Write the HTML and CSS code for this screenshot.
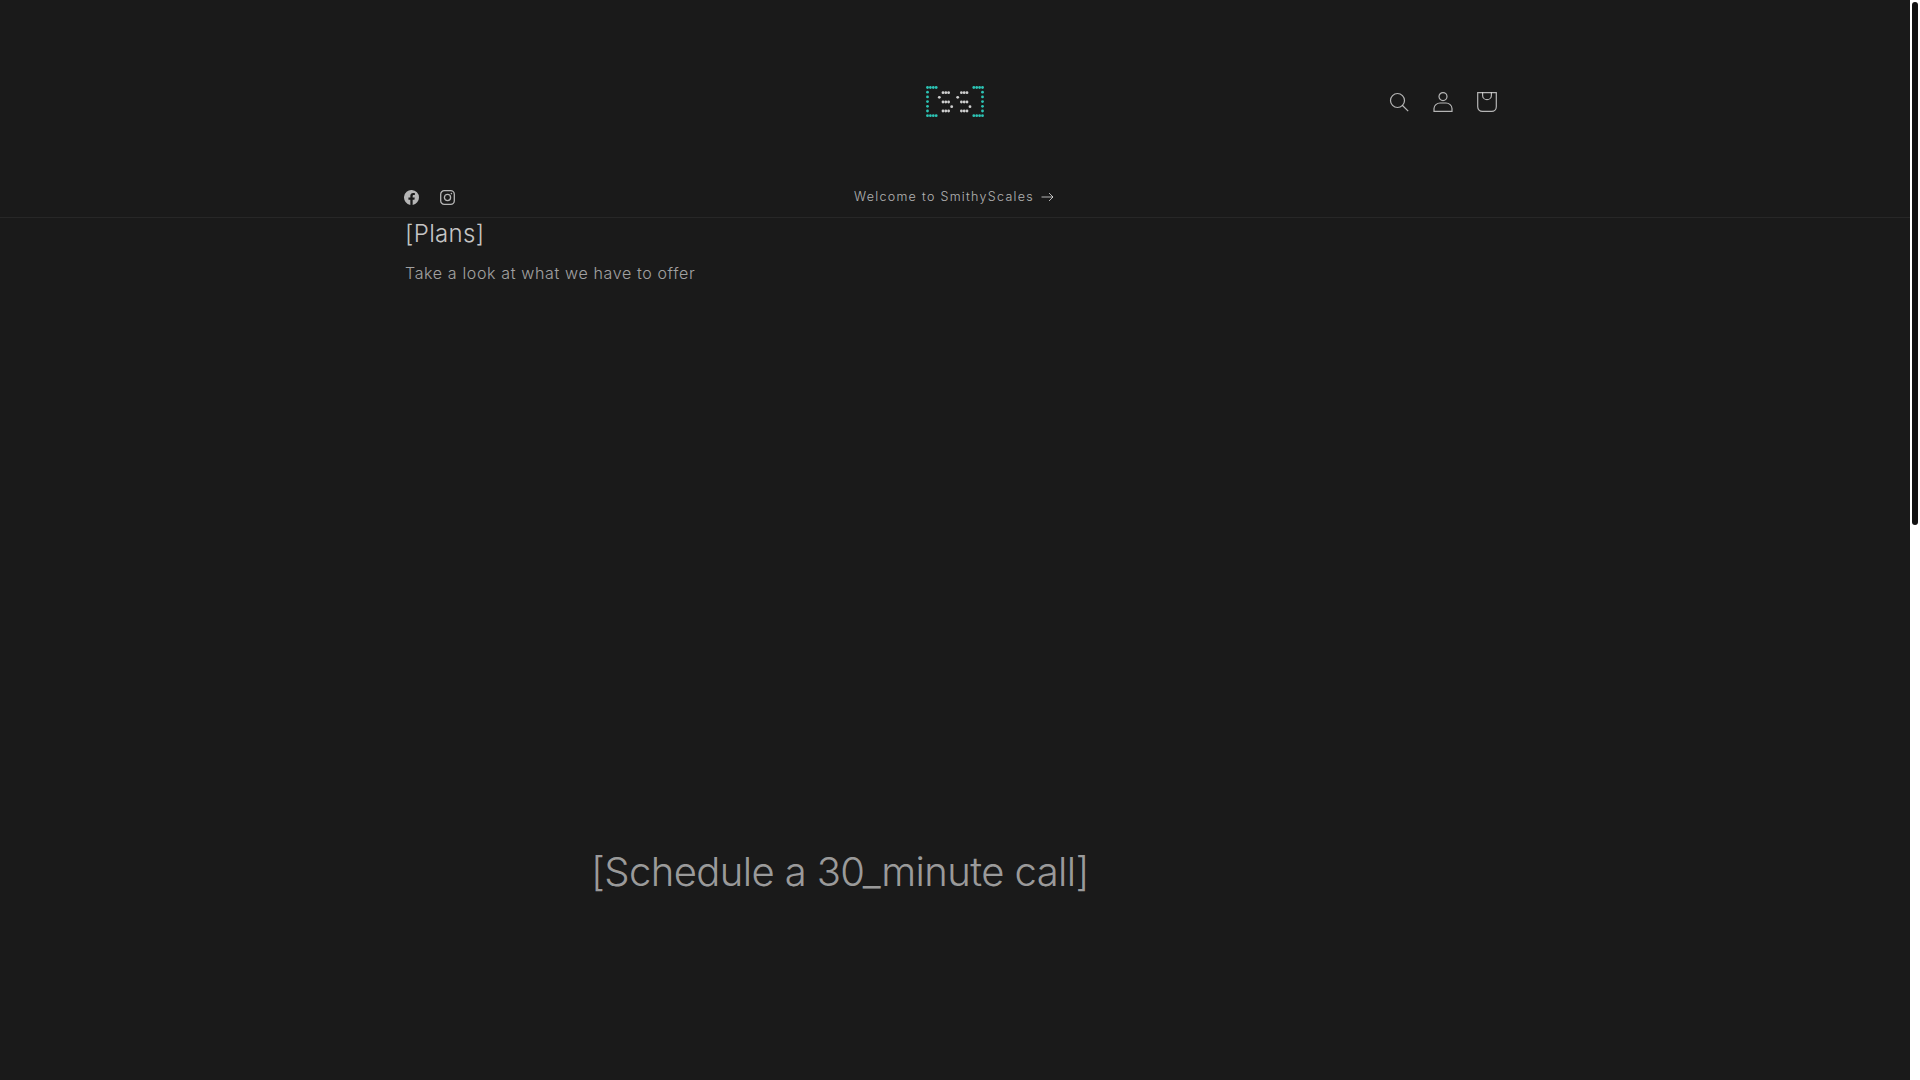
FILE: index.html
```html
<!DOCTYPE html>
<html lang="en">
<head>
<meta charset="utf-8">
<title>SmithyScales</title>
<link rel="stylesheet" href="styles.css">
</head>
<body>
<div class="page">
<header class="site-header">
  <div class="header-row">
    <a class="logo" href="#" aria-label="SmithyScales">
      <svg width="60" height="32" viewBox="0 0 60 32">
        <g fill="#2cc4b5">
          <circle cx="2.5" cy="1.5" r="1.4"/><circle cx="5.4" cy="1.5" r="1.4"/><circle cx="8.3" cy="1.5" r="1.4"/><circle cx="11.2" cy="1.5" r="1.4"/>
          <circle cx="2.5" cy="6.2" r="1.4"/><circle cx="2.5" cy="10.9" r="1.4"/><circle cx="2.5" cy="15.6" r="1.4"/><circle cx="2.5" cy="20.3" r="1.4"/><circle cx="2.5" cy="25" r="1.4"/>
          <circle cx="2.5" cy="29.7" r="1.4"/><circle cx="5.4" cy="29.7" r="1.4"/><circle cx="8.3" cy="29.7" r="1.4"/><circle cx="11.2" cy="29.7" r="1.4"/>
          <circle cx="48.8" cy="1.5" r="1.4"/><circle cx="51.7" cy="1.5" r="1.4"/><circle cx="54.6" cy="1.5" r="1.4"/><circle cx="57.5" cy="1.5" r="1.4"/>
          <circle cx="57.5" cy="6.2" r="1.4"/><circle cx="57.5" cy="10.9" r="1.4"/><circle cx="57.5" cy="15.6" r="1.4"/><circle cx="57.5" cy="20.3" r="1.4"/><circle cx="57.5" cy="25" r="1.4"/>
          <circle cx="48.8" cy="29.7" r="1.4"/><circle cx="51.7" cy="29.7" r="1.4"/><circle cx="54.6" cy="29.7" r="1.4"/><circle cx="57.5" cy="29.7" r="1.4"/>
        </g>
        <g fill="#cfcfcf">
          <circle cx="18" cy="6.7" r="1.4"/><circle cx="20.8" cy="6.7" r="1.4"/><circle cx="23.6" cy="6.7" r="1.4"/>
          <circle cx="14.3" cy="11.3" r="1.4"/>
          <circle cx="18" cy="16" r="1.4"/><circle cx="20.8" cy="16" r="1.4"/><circle cx="23.6" cy="16" r="1.4"/>
          <circle cx="26.7" cy="20.7" r="1.4"/>
          <circle cx="18" cy="25" r="1.4"/><circle cx="20.8" cy="25" r="1.4"/><circle cx="23.6" cy="25" r="1.4"/>
          <circle cx="36.4" cy="6.7" r="1.4"/><circle cx="39.2" cy="6.7" r="1.4"/><circle cx="42" cy="6.7" r="1.4"/>
          <circle cx="32.7" cy="11.3" r="1.4"/>
          <circle cx="36.4" cy="16" r="1.4"/><circle cx="39.2" cy="16" r="1.4"/><circle cx="42" cy="16" r="1.4"/>
          <circle cx="45" cy="20.7" r="1.4"/>
          <circle cx="36.4" cy="25" r="1.4"/><circle cx="39.2" cy="25" r="1.4"/><circle cx="42" cy="25" r="1.4"/>
        </g>
      </svg>
    </a>
    <nav class="header-icons">
      <a class="icon-btn" href="#" aria-label="Search">
        <svg width="20" height="20" viewBox="0 0 20 20" fill="none" stroke="currentColor" stroke-width="1.2"><circle cx="8.5" cy="8.5" r="7"/><path d="M13.5 13.5 19.2 19.2"/></svg>
      </a>
      <a class="icon-btn" href="#" aria-label="Log in">
        <svg width="20" height="20" viewBox="0 0 20 20" fill="none" stroke="currentColor" stroke-width="1.2"><circle cx="10" cy="4.6" r="4"/><path d="M1 19.4h18v-2.9c0-3-3-5.5-6-5.5H7c-3 0-6 2.5-6 5.5v2.9z"/></svg>
      </a>
      <a class="icon-btn" href="#" aria-label="Cart">
        <svg width="20" height="20" viewBox="0 0 20 20" fill="none" stroke="currentColor" stroke-width="1.2"><path d="M0.7 0.6h18.6v14.2c0 2.6-2 4.6-4.6 4.6H5.3c-2.6 0-4.6-2-4.6-4.6V0.6z"/><path d="M5.6 0.6v2.8c0 2.4 2 4.2 4.4 4.2s4.4-1.8 4.4-4.2V0.6"/></svg>
      </a>
    </nav>
  </div>
  <div class="utility-bar">
    <div class="utility-inner">
      <div class="socials">
        <a class="social" href="#" aria-label="Facebook">
          <svg width="15" height="15" viewBox="0 0 16 16" fill="currentColor"><path d="M16 8a8 8 0 1 0-9.25 7.9v-5.6H4.72V8h2.03V6.24c0-2 1.2-3.11 3.02-3.11.88 0 1.8.16 1.8.16v1.97h-1.01c-1 0-1.31.62-1.31 1.25V8h2.22l-.35 2.3H9.25v5.6A8 8 0 0 0 16 8z"/></svg>
        </a>
        <a class="social" href="#" aria-label="Instagram">
          <svg width="15" height="15" viewBox="0 0 15 15" fill="none" stroke="currentColor" stroke-width="1.3"><rect x="0.7" y="0.7" width="13.6" height="13.6" rx="3.6"/><circle cx="7.5" cy="7.5" r="3.1"/><circle cx="11.4" cy="3.6" r="0.8" fill="currentColor" stroke="none"/></svg>
        </a>
      </div>
      <a class="announcement" href="#">Welcome to SmithyScales
        <svg class="arrow" width="13" height="10" viewBox="0 0 13 10" fill="none" stroke="currentColor" stroke-width="1"><path d="M0.5 5h11.5M8 1l4 4-4 4"/></svg>
      </a>
    </div>
  </div>
</header>
<main>
  <section class="plans">
    <h2 class="plans-title">[Plans]</h2>
    <p class="plans-sub">Take a look at what we have to offer</p>
  </section>
  <section class="schedule">
    <h2 class="schedule-title">[Schedule a 30_minute call]</h2>
  </section>
</main>
</div>
<aside class="scrollbar"><div class="scrollbar-thumb"></div></aside>
</body>
</html>
```
FILE: styles.css
```css
html {
  background: #1a1a1a;
}
body {
  margin: 0;
  height: 1080px;
  overflow: hidden;
  display: flex;
  background: #1a1a1a;
  color: rgba(255, 255, 255, 0.68);
  font-family: Inter, "Liberation Sans", sans-serif;
}
a {
  color: inherit;
  text-decoration: none;
}
.page {
  flex: 1;
  min-width: 0;
}
.scrollbar {
  width: 10px;
  flex: none;
  box-sizing: border-box;
  padding: 2px;
  background: #fff;
}
.scrollbar-thumb {
  height: 523px;
  background: #111;
  border-radius: 3px;
}
.header-row {
  position: relative;
  width: 1200px;
  margin: 0 auto;
  box-sizing: border-box;
  height: 177px;
  padding: 80px 46px 53px 50px;
  display: flex;
  justify-content: flex-end;
}
.logo {
  position: absolute;
  left: 570px;
  top: 86px;
  display: block;
  line-height: 0;
}
.header-icons {
  display: flex;
}
.icon-btn {
  width: 44px;
  height: 44px;
  display: flex;
  align-items: center;
  justify-content: center;
}
.utility-bar {
  border-bottom: 1px solid rgba(255, 255, 255, 0.06);
}
.utility-inner {
  position: relative;
  width: 1200px;
  margin: 0 auto;
  height: 40px;
  display: flex;
  align-items: center;
  justify-content: center;
}
.socials {
  position: absolute;
  left: 34px;
  top: 0;
  height: 40px;
  display: flex;
  align-items: center;
}
.social {
  width: 44px;
  margin-right: -8px;
  height: 40px;
  display: flex;
  align-items: center;
  justify-content: center;
}
.announcement {
  font-size: 12.5px;
  font-weight: 350;
  letter-spacing: 1.3px;
  line-height: 42px;
  height: 40px;
  display: flex;
  align-items: center;
  gap: 7px;
  margin-right: 2px;
}
.plans {
  width: 1100px;
  margin: 0 auto;
}
.plans-title {
  margin: 0;
  font-size: 24px;
  line-height: 32px;
  font-weight: 350;
  letter-spacing: 0.35px;
  color: rgba(255, 255, 255, 0.75);
}
.plans-sub {
  margin: 11px 0 0;
  font-size: 16px;
  line-height: 24px;
  font-weight: 350;
  letter-spacing: 0.64px;
  color: rgba(255, 255, 255, 0.6);
}
.schedule {
  width: 1100px;
  margin: 0 auto;
  padding: 562px 0 0 186px;
  box-sizing: border-box;
}
.schedule-title {
  margin: 0;
  font-size: 40px;
  line-height: 50px;
  font-weight: 350;
  letter-spacing: -0.6px;
  color: rgba(255, 255, 255, 0.58);
}
```
